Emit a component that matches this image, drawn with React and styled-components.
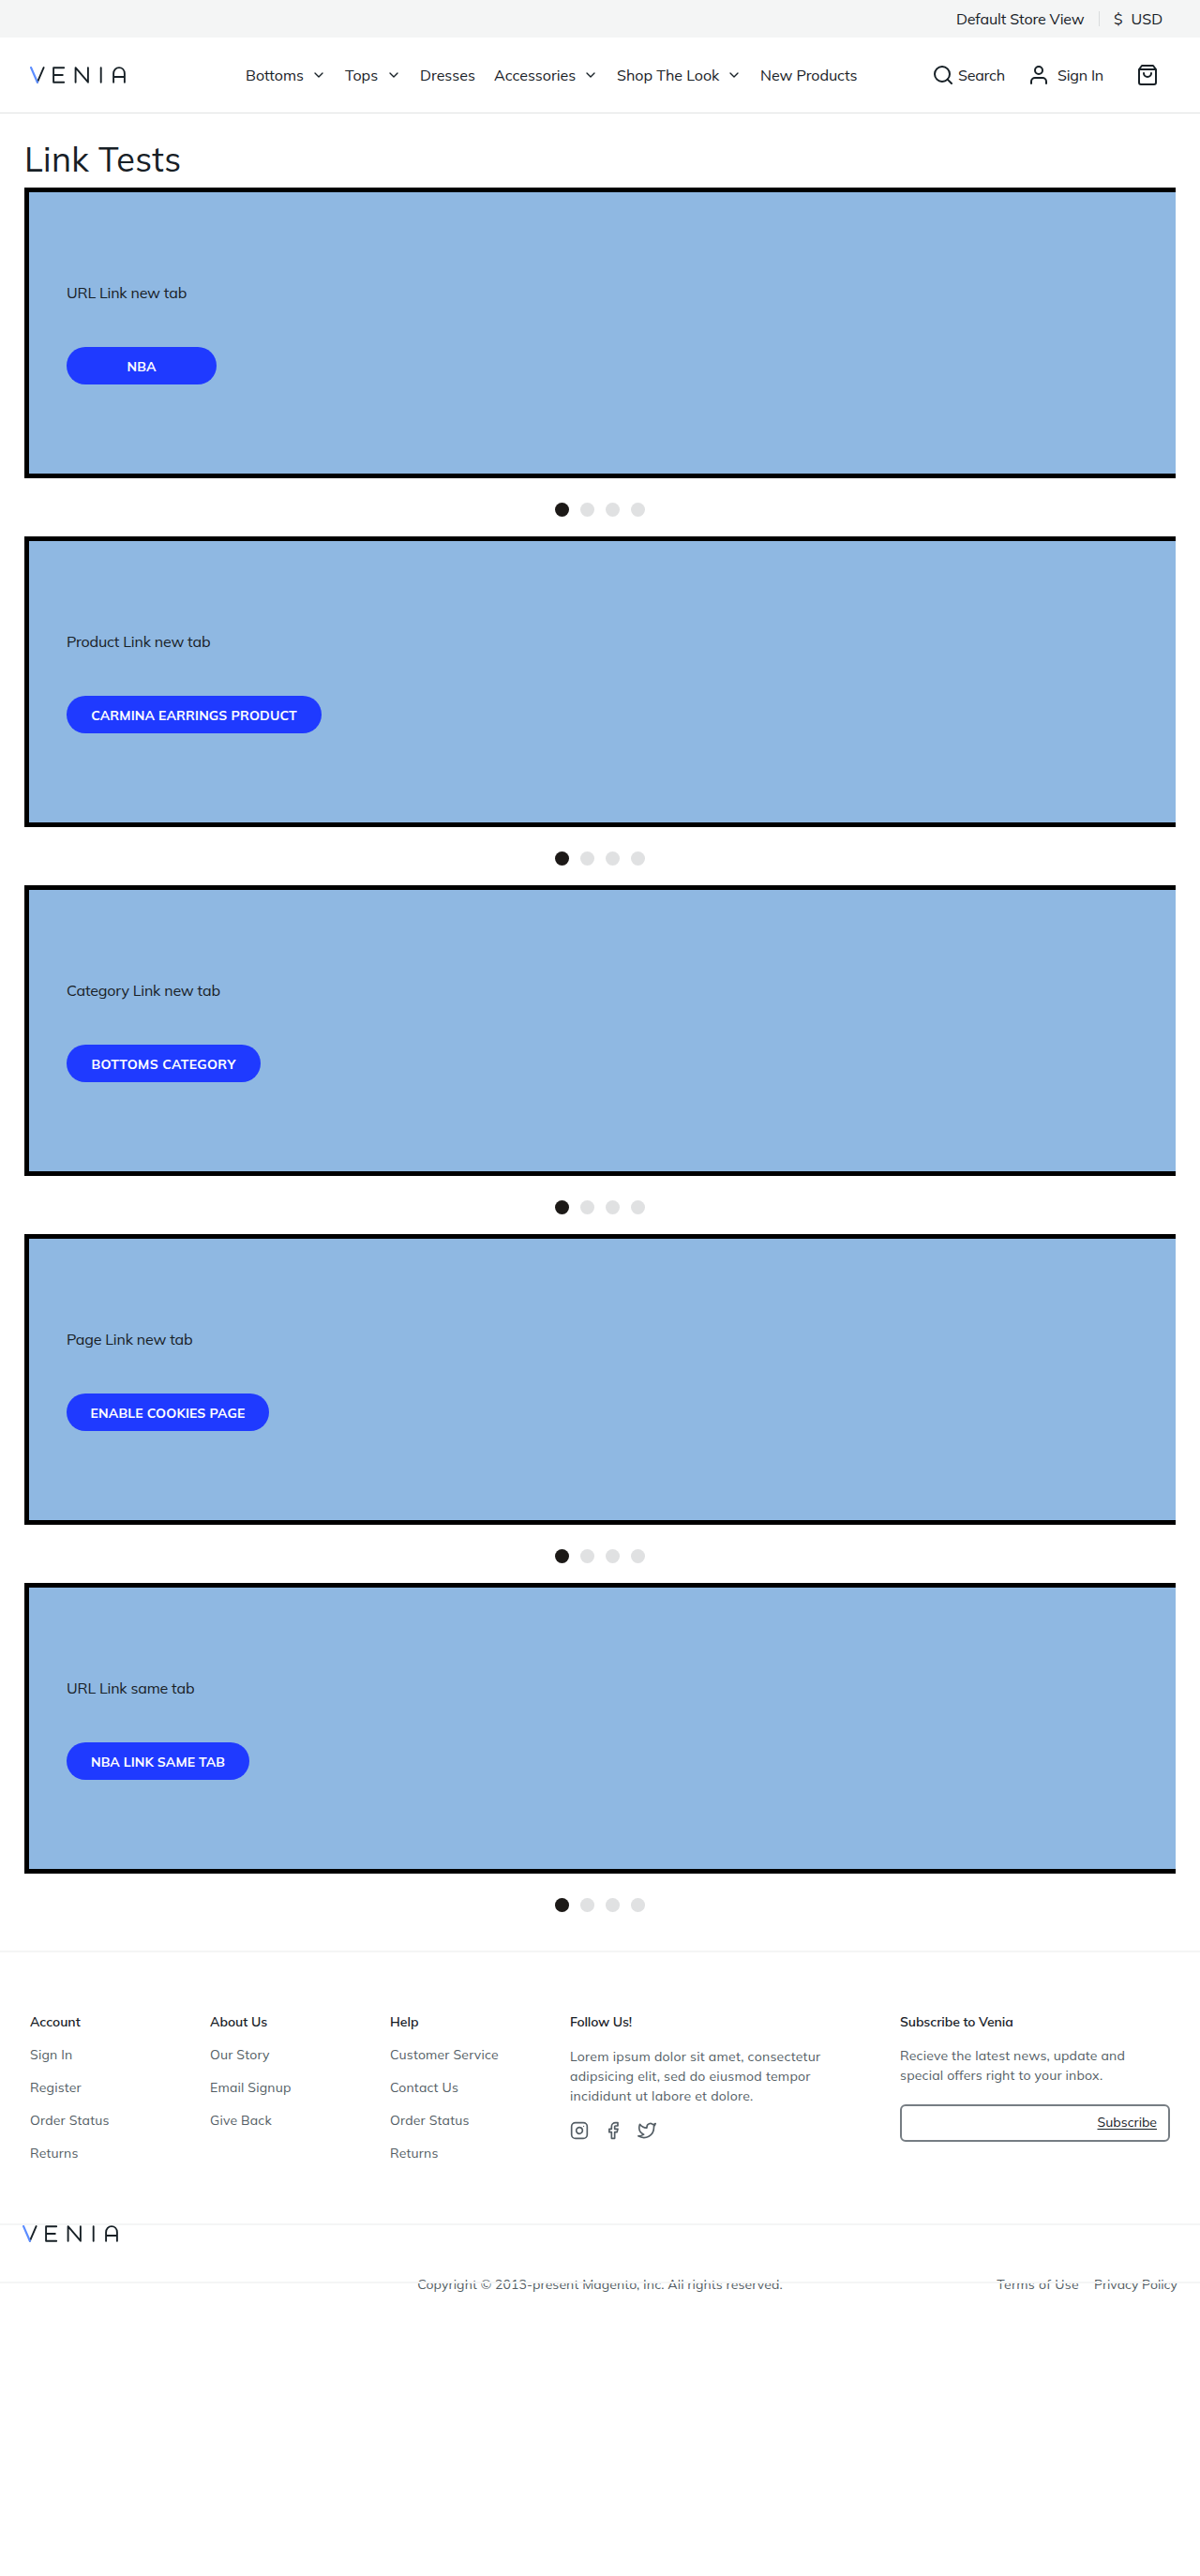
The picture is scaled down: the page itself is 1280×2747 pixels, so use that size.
import React from "react";
import styled, { createGlobalStyle } from "styled-components";

const INK = "#172026";
const MUTED = "#535d64";
const RULE = "#f4f5f5";

const GlobalStyle = createGlobalStyle`
  *, *::before, *::after { box-sizing: border-box; }
  body {
    margin: 0;
    background: #fff;
    color: ${INK};
    font-family: Mulish, "Open Sans", sans-serif;
    font-size: 16px;
    line-height: 24px;
  }
  h1, h2, p, ul { margin: 0; padding: 0; font-weight: inherit; }
  ul { list-style: none; }
  button { font: inherit; color: inherit; background: none; border: 0; padding: 0; }
  svg { display: block; flex: none; }
`;

const Page = styled.div`
  min-height: 2747px;
`;

const TopBar = styled.div`
  display: flex;
  justify-content: flex-end;
  align-items: center;
  height: 40px;
  padding-right: 40px;
  background: #f4f5f5;
  white-space: nowrap;
`;

const StoreView = styled.button`
  width: 136px;
  letter-spacing: -0.14px;
  text-align: left;
  white-space: nowrap;
`;

const TopBarRule = styled.span`
  width: 1px;
  height: 16px;
  margin: 0 15px 0 16px;
  background: #d9dcdd;
`;

const Currency = styled.button`
  display: flex;
  gap: 9px;
  width: 52px;
`;

const Header = styled.header`
  display: grid;
  grid-template-columns: 230px 1fr auto;
  align-items: center;
  height: 81px;
  padding: 0 32px;
  border-bottom: 1px solid #e0e2e3;
`;

const Nav = styled.nav`
  display: flex;
  gap: 20px;
`;

const NavItem = styled.a`
  display: flex;
  align-items: center;
  gap: 8px;
  white-space: nowrap;
`;

const NavLabel = styled.span`
  width: ${(p) => p.$width}px;
  letter-spacing: ${(p) => p.$tracking || 0}px;
`;

const Actions = styled.div`
  display: flex;
  align-items: center;
  padding-right: 12px;
`;

const Action = styled.button`
  display: flex;
  align-items: center;
  gap: ${(p) => p.$gap || 0}px;
  width: ${(p) => p.$width}px;
  letter-spacing: -0.22px;
  white-space: nowrap;
`;

const Main = styled.main`
  padding: 26px 26px 0;
`;

const Title = styled.h1`
  height: 53px;
  font-size: 36px;
  line-height: 45px;
  letter-spacing: 0.35px;
`;

const Banner = styled.section`
  display: flex;
  flex-direction: column;
  align-items: flex-start;
  height: 310px;
  padding: 95px 40px 0;
  border: 5px solid #000;
  border-right: 0;
  background: #8fb8e2;
`;

const BannerText = styled.p`
  margin-bottom: 46px;
  letter-spacing: -0.17px;
`;

const BannerButton = styled.button`
  width: ${(p) => p.$width}px;
  height: 40px;
  padding-top: 1px;
  border-radius: 20px;
  background: #1f3aff;
  color: #fff;
  font-size: 14px;
  font-weight: 700;
  letter-spacing: ${(p) => p.$tracking ?? 0.15}px;
  line-height: 40px;
  white-space: nowrap;
`;

const Dots = styled.div`
  display: flex;
  justify-content: center;
  gap: 12px;
  height: 62px;
  padding-top: 26px;
`;

const Dot = styled.span`
  width: 15px;
  height: 15px;
  border-radius: 50%;
  background: ${(p) => (p.$active ? "#1c1917" : "#e0e1e2")};
`;

const Footer = styled.footer`
  margin-top: 20px;
  font-size: 14px;
  line-height: 21px;
  color: ${MUTED};
`;

const Rule = styled.div`
  position: relative;
  height: 2px;
  background: ${RULE};
`;

const FooterColumns = styled.div`
  display: grid;
  grid-template-columns: 192px 192px 192px 352px 288px;
  height: 289px;
  padding: 64px 32px 0;
`;

const FooterHeading = styled.h2`
  margin-bottom: ${(p) => p.$space || 14}px;
  color: ${INK};
  font-size: 14px;
  font-weight: 600;
  letter-spacing: ${(p) => p.$tracking || 0}px;
`;

const LinkList = styled.ul`
  display: flex;
  flex-direction: column;
  gap: 14px;
  letter-spacing: 0.18px;
`;

const Blurb = styled.p`
  letter-spacing: ${(p) => p.$tracking}px;
  white-space: pre;
`;

const Socials = styled.div`
  display: flex;
  gap: 16px;
  margin-top: 16px;
`;

const SubscribeBox = styled.div`
  display: flex;
  justify-content: flex-end;
  width: 288px;
  height: 40px;
  margin-top: 20px;
  padding: 7px 12px 0;
  border: 2px solid #767d83;
  border-radius: 6px;
`;

const SubscribeButton = styled.button`
  height: 21px;
  color: ${INK};
  font-size: 14px;
  line-height: 21px;
  text-decoration: underline;
  text-underline-offset: 1.5px;
  text-decoration-thickness: 1px;
`;

const FooterBrand = styled.div`
  height: 60px;
  padding-left: 24px;
`;

const Legal = styled.div`
  display: grid;
  grid-template-columns: 1fr auto 1fr;
  margin-top: -9px;
  padding: 0 24px;
  white-space: nowrap;
`;

const Copyright = styled.p`
  grid-column: 2;
  letter-spacing: 0.1px;
`;

const LegalLinks = styled.div`
  display: flex;
  justify-content: flex-end;
  gap: 16px;
`;

const LegalLink = styled.a`
  letter-spacing: ${(p) => p.$tracking || 0}px;
`;

function Logo() {
  return (
    <svg width="102" height="18" viewBox="0 0 102 18" fill="none" stroke={INK} strokeWidth="1.9" strokeLinecap="round" strokeLinejoin="round" role="img" aria-label="Venia">
      <path d="M7.9 16.6 14.6 1.1" />
      <path d="M1.1 1.1 7.9 16.8" stroke="#5c8dff" strokeWidth="2.2" />
      <path d="M36.2 1.2H25.1V16.7H36.2M25.1 9H34.8M48.6 16.8V1.2L61.9 16.7V1.2M75.7 1.2V16.8M89.1 16.8V7.6C89.1 3.6 91.8 1.1 95 1.1S100.9 3.6 100.9 7.6V16.8M89.1 11H100.9" />
    </svg>
  );
}

function Icon({ size = 24, color = INK, children }) {
  return (
    <svg width={size} height={size} viewBox="0 0 24 24" fill="none" stroke={color} strokeWidth="2" strokeLinecap="round" strokeLinejoin="round">
      {children}
    </svg>
  );
}

const navItems = [
  { label: "Bottoms", width: 62, menu: true },
  { label: "Tops", width: 36, menu: true },
  { label: "Dresses", width: 59 },
  { label: "Accessories", width: 87, menu: true },
  { label: "Shop The Look", width: 109, menu: true },
  { label: "New Products", width: 103, tracking: -0.05 },
];

const banners = [
  { text: "URL Link new tab", button: "NBA", width: 160 },
  { text: "Product Link new tab", button: "CARMINA EARRINGS PRODUCT", width: 272 },
  { text: "Category Link new tab", button: "BOTTOMS CATEGORY", width: 207, tracking: 0.34 },
  { text: "Page Link new tab", button: "ENABLE COOKIES PAGE", width: 216 },
  { text: "URL Link same tab", button: "NBA LINK SAME TAB", width: 195, tracking: 0.08 },
];

const linkGroups = [
  { title: "Account", links: ["Sign In", "Register", "Order Status", "Returns"] },
  { title: "About Us", links: ["Our Story", "Email Signup", "Give Back"] },
  { title: "Help", links: ["Customer Service", "Contact Us", "Order Status", "Returns"] },
];

export default function App() {
  return (
    <Page>
      <GlobalStyle />
      <TopBar>
        <StoreView>Default Store View</StoreView>
        <TopBarRule />
        <Currency>
          <span>$</span>
          <span>USD</span>
        </Currency>
      </TopBar>
      <Header>
        <Logo />
        <Nav>
          {navItems.map((item) => (
            <NavItem key={item.label}>
              <NavLabel $width={item.width} $tracking={item.tracking}>{item.label}</NavLabel>
              {item.menu && (
                <Icon size={16}>
                  <path d="m6 9 6 6 6-6" />
                </Icon>
              )}
            </NavItem>
          ))}
        </Nav>
        <Actions>
          <Action $width={102} $gap={4}>
            <Icon>
              <circle cx="11" cy="11" r="8" />
              <path d="m21 21-4.35-4.35" />
            </Icon>
            Search
          </Action>
          <Action $width={116} $gap={8}>
            <Icon>
              <path d="M20 21v-2a4 4 0 0 0-4-4H8a4 4 0 0 0-4 4v2" />
              <circle cx="12" cy="7" r="4" />
            </Icon>
            Sign In
          </Action>
          <Action $width={24} aria-label="Bag">
            <Icon>
              <path d="M6 2 3 6v14a2 2 0 0 0 2 2h14a2 2 0 0 0 2-2V6l-3-4zM3 6h18M16 10a4 4 0 0 1-8 0" />
            </Icon>
          </Action>
        </Actions>
      </Header>
      <Main>
        <Title>Link Tests</Title>
        {banners.map((b) => (
          <React.Fragment key={b.text}>
            <Banner>
              <BannerText>{b.text}</BannerText>
              <BannerButton $width={b.width} $tracking={b.tracking}>{b.button}</BannerButton>
            </Banner>
            <Dots>
              <Dot $active />
              <Dot />
              <Dot />
              <Dot />
            </Dots>
          </React.Fragment>
        ))}
      </Main>
      <Footer>
        <Rule />
        <FooterColumns>
          {linkGroups.map((g) => (
            <div key={g.title}>
              <FooterHeading>{g.title}</FooterHeading>
              <LinkList>
                {g.links.map((l) => (
                  <li key={l}>{l}</li>
                ))}
              </LinkList>
            </div>
          ))}
          <div>
            <FooterHeading $space={16} $tracking={-0.15}>Follow Us!</FooterHeading>
            <Blurb $tracking={0.26}>
              {"Lorem ipsum dolor sit amet, consectetur\nadipsicing elit, sed do eiusmod tempor\nincididunt ut labore et dolore."}
            </Blurb>
            <Socials>
              <Icon size={20} color={MUTED}>
                <rect x="2" y="2" width="20" height="20" rx="5" />
                <path d="M16 11.37A4 4 0 1 1 12.63 8 4 4 0 0 1 16 11.37z" />
                <path d="M17.5 6.5h.01" strokeWidth="1.4" />
              </Icon>
              <Icon size={20} color={MUTED}>
                <path d="M18 2h-3a5 5 0 0 0-5 5v3H7v4h3v8h4v-8h3l1-4h-4V7a1 1 0 0 1 1-1h3z" />
              </Icon>
              <Icon size={20} color={MUTED}>
                <path d="M23 3a10.9 10.9 0 0 1-3.14 1.53 4.48 4.48 0 0 0-7.86 3v1A10.66 10.66 0 0 1 3 4s-4 9 5 13a11.64 11.64 0 0 1-7 2c9 5 20 0 20-11.5a4.5 4.5 0 0 0-.08-.83A7.72 7.72 0 0 0 23 3z" />
              </Icon>
            </Socials>
          </div>
          <div>
            <FooterHeading $space={15} $tracking={-0.08}>Subscribe to Venia</FooterHeading>
            <Blurb $tracking={0.19}>
              {"Recieve the latest news, update and\nspecial offers right to your inbox."}
            </Blurb>
            <SubscribeBox>
              <SubscribeButton>Subscribe</SubscribeButton>
            </SubscribeBox>
          </div>
        </FooterColumns>
        <Rule />
        <FooterBrand>
          <Logo />
        </FooterBrand>
        <Rule />
        <Legal>
          <Copyright>Copyright © 2013-present Magento, Inc. All rights reserved.</Copyright>
          <LegalLinks>
            <LegalLink $tracking={0.3}>Terms of Use</LegalLink>
            <LegalLink>Privacy Policy</LegalLink>
          </LegalLinks>
        </Legal>
      </Footer>
    </Page>
  );
}
